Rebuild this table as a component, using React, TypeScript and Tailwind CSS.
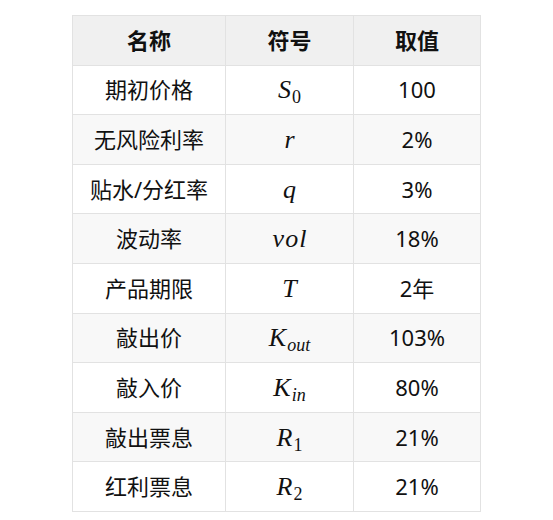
import React from "react";

type Row = { name: string; sym: React.ReactNode; value: string };

function Sym({ base, sub, subItalic }: { base: string; sub?: string; subItalic?: boolean }) {
  return (
    <span className="font-['Liberation_Serif','DejaVu_Serif',serif] text-[26px] leading-none">
      <span className="italic tracking-[1px] [&]:mr-[-1px]">{base}</span>
      {sub && (
        <sub className={`text-[18px] relative top-[5px] align-baseline ml-[1px] ${subItalic ? "italic" : ""}`}>
          {sub}
        </sub>
      )}
    </span>
  );
}

const rows: Row[] = [
  { name: "期初价格", sym: <Sym base="S" sub="0" />, value: "100" },
  { name: "无风险利率", sym: <Sym base="r" />, value: "2%" },
  { name: "贴水/分红率", sym: <Sym base="q" />, value: "3%" },
  { name: "波动率", sym: <Sym base="vol" />, value: "18%" },
  { name: "产品期限", sym: <Sym base="T" />, value: "2年" },
  { name: "敲出价", sym: <Sym base="K" sub="out" subItalic />, value: "103%" },
  { name: "敲入价", sym: <Sym base="K" sub="in" subItalic />, value: "80%" },
  { name: "敲出票息", sym: <Sym base="R" sub="1" />, value: "21%" },
  { name: "红利票息", sym: <Sym base="R" sub="2" />, value: "21%" },
];

export default function App() {
  return (
    <div className="w-[553px] h-[520px] bg-white pt-[15px] font-['Noto_Sans','Noto_Sans_CJK_SC',sans-serif] text-[#111]">
      <table className="mx-auto w-[408px] table-fixed border-collapse text-[22px]">
        <colgroup>
          <col className="w-[153px]" />
          <col className="w-[128px]" />
          <col className="w-[127px]" />
        </colgroup>
        <thead>
          <tr className="h-[49.6px] bg-[#f0f0f0]">
            <th className="border border-[#e2e2e2] font-bold">名称</th>
            <th className="border border-[#e2e2e2] font-bold">符号</th>
            <th className="border border-[#e2e2e2] font-bold">取值</th>
          </tr>
        </thead>
        <tbody>
          {rows.map((r, i) => (
            <tr key={r.name} className={`h-[49.6px] ${i % 2 === 1 ? "bg-[#f8f8f8]" : "bg-white"}`}>
              <td className="border border-[#e2e2e2] text-center">{r.name}</td>
              <td className="border border-[#e2e2e2] text-center">{r.sym}</td>
              <td className="border border-[#e2e2e2] text-center">{r.value}</td>
            </tr>
          ))}
        </tbody>
      </table>
    </div>
  );
}
